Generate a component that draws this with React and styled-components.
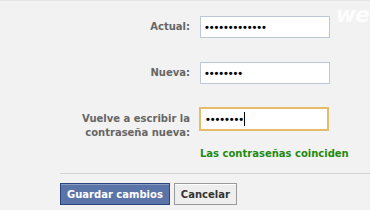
import React from 'react';
import styled, { createGlobalStyle } from 'styled-components';

const GlobalStyle = createGlobalStyle`
  html, body {
    margin: 0;
    padding: 0;
    background: #f2f2f2;
  }
  body {
    font-family: "DejaVu Sans", Tahoma, sans-serif;
    font-size: 10px;
  }
`;

const Page = styled.div`
  position: relative;
  height: 209px;
  overflow: hidden;
  background: #f2f2f2;
  border-top: 1px solid #e6e6e6;
  padding-top: 15px;
  box-sizing: border-box;
`;

const Watermark = styled.div`
  position: absolute;
  top: 1px;
  right: 1px;
  font-family: "DejaVu Sans", sans-serif;
  font-size: 22px;
  font-weight: bold;
  font-style: italic;
  letter-spacing: -1px;
  color: #ffffff;
  opacity: 0.9;
`;

const Row = styled.div`
  display: flex;
  align-items: flex-start;
  padding-left: 60px;
  margin-bottom: ${p => p.$gap || 0}px;
`;

const Label = styled.label`
  width: 140px;
  box-sizing: border-box;
  padding-left: 20px;
  padding-top: ${p => p.$top || 4}px;
  padding-right: 10px;
  text-align: right;
  font-weight: bold;
  color: #666666;
  line-height: 14px;
`;

const Field = styled.div`
  display: flex;
  align-items: center;
  width: 130px;
  height: ${p => (p.$focused ? 24 : 22)}px;
  box-sizing: border-box;
  margin-left: ${p => (p.$focused ? -1 : 0)}px;
  padding-left: ${p => (p.$focused ? 5 : 4)}px;
  background: #ffffff;
  border: ${p => (p.$focused ? '2px solid #e5bd6a' : '1px solid #bdc7d8')};
`;

const Dots = styled.span`
  font-family: "Liberation Sans", Arial, sans-serif;
  font-size: 11px;
  letter-spacing: 0.9px;
  color: #000;
  font-weight: bold;
  line-height: 12px;
`;

const Caret = styled.span`
  display: inline-block;
  width: 1px;
  height: 14px;
  background: #000;
`;

const Message = styled.div`
  margin: 7px 0 0 200px;
  color: #1f8a0f;
  font-weight: bold;
  line-height: 14px;
`;

const Divider = styled.div`
  margin: 12px 0 0 60px;
  border-top: 1px solid #d3d3d3;
`;

const Actions = styled.div`
  display: flex;
  gap: 4px;
  margin: 9px 0 0 60px;
`;

const Button = styled.button`
  height: 22px;
  padding: 0 6px;
  font-family: "DejaVu Sans", Tahoma, sans-serif;
  font-size: 10px;
  font-weight: bold;
  cursor: pointer;
  color: ${p => (p.$primary ? '#ffffff' : '#333333')};
  background: ${p => (p.$primary ? '#5b74a8' : '#eeeeee')};
  border: 1px solid ${p => (p.$primary ? '#29447e' : '#999999')};
  box-shadow: inset 0 1px 0 ${p => (p.$primary ? '#8a9cc2' : '#ffffff')};
`;

const dots = n => '\u2022'.repeat(n);

export default function App() {
  return (
    <>
      <GlobalStyle />
      <Page>
        <Watermark>we</Watermark>
        <Row $gap={24}>
          <Label>Actual:</Label>
          <Field><Dots>{dots(13)}</Dots></Field>
        </Row>
        <Row $gap={23}>
          <Label>Nueva:</Label>
          <Field><Dots>{dots(8)}</Dots></Field>
        </Row>
        <Row>
          <Label $top={5}>Vuelve a escribir la<br />contraseña nueva:</Label>
          <Field $focused><Dots>{dots(8)}</Dots><Caret /></Field>
        </Row>
        <Message>Las contraseñas coinciden</Message>
        <Divider />
        <Actions>
          <Button $primary>Guardar cambios</Button>
          <Button>Cancelar</Button>
        </Actions>
      </Page>
    </>
  );
}
